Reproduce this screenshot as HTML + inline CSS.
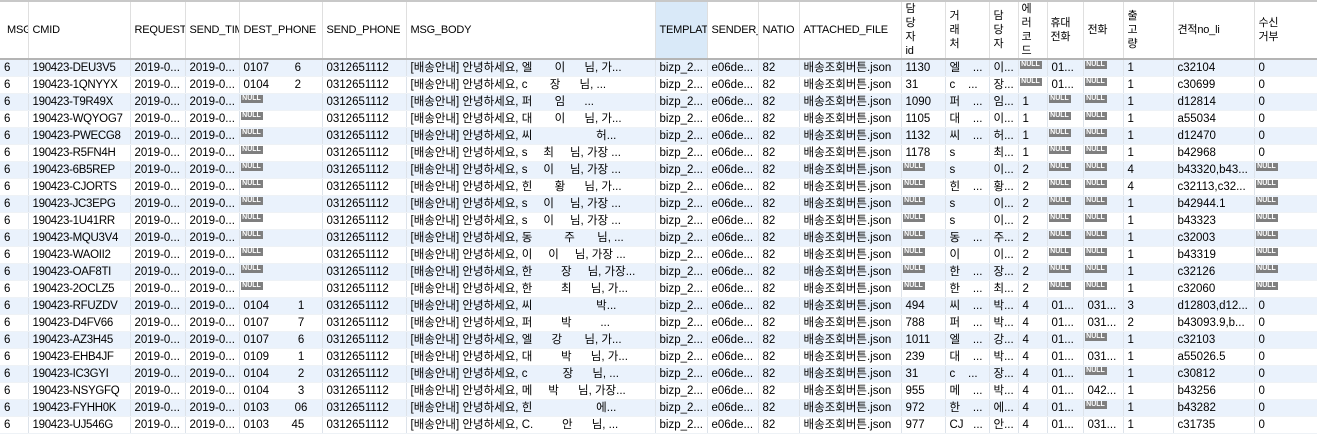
<!DOCTYPE html>
<html><head><meta charset="utf-8"><style>
*{margin:0;padding:0;box-sizing:border-box}
body{width:1317px;height:438px;overflow:hidden;background:#fff;font-family:"Liberation Sans","Noto Sans CJK KR",sans-serif;font-size:11.5px;color:#000}
table{border-collapse:collapse;table-layout:fixed;width:1317px;border-top:2px solid #c8c8c8}
th{height:58px;font-weight:normal;text-align:left;padding-left:4px;border-right:1px solid #dfdfdf;border-bottom:2px solid #b4b4b4;white-space:nowrap;overflow:hidden;line-height:14px;vertical-align:middle;font-size:11px;letter-spacing:-0.2px}
th.hl{background:#d9e9f8}
td{height:17px;padding-left:4px;border-right:1px solid #dde3ea;border-bottom:1px solid #eef2f6;white-space:pre;overflow:hidden;text-overflow:ellipsis;line-height:16px;vertical-align:top;position:relative}
td:nth-child(2){letter-spacing:-0.3px}
tr:nth-child(even) td{background:#eaf2fc}
th:last-child,td:last-child{border-right:none}
i{position:absolute;left:1px;top:1px;width:22px;height:8px;background:#7f7f7f;color:#fff;font-style:normal;font-size:7px;font-weight:bold;line-height:8px;text-align:center;font-family:"Liberation Sans",sans-serif;letter-spacing:0}
</style></head><body>
<table>
<colgroup><col style="width:28px"><col style="width:102px"><col style="width:55px"><col style="width:54px"><col style="width:83px"><col style="width:84px"><col style="width:249px"><col style="width:52px"><col style="width:51px"><col style="width:41px"><col style="width:102px"><col style="width:44px"><col style="width:44px"><col style="width:29px"><col style="width:29px"><col style="width:36px"><col style="width:40px"><col style="width:50px"><col style="width:81px"><col style="width:63px"></colgroup>
<tr><th style="padding-left:7px">MSG</th><th>CMID</th><th>REQUEST</th><th>SEND_TIM</th><th>DEST_PHONE</th><th>SEND_PHONE</th><th>MSG_BODY</th><th class="hl">TEMPLAT</th><th>SENDER_</th><th>NATIO</th><th>ATTACHED_FILE</th><th>담<br>당<br>자<br>id</th><th>거<br>래<br>처</th><th>담<br>당<br>자</th><th style="padding-left:3px">에<br>러<br>코<br>드</th><th style="padding-left:3px">휴대<br>전화</th><th>전화</th><th>출<br>고<br>량</th><th>견적no_li</th><th>수신<br>거부</th></tr>
<tr><td>6</td><td>190423-DEU3V5</td><td>2019-0...</td><td>2019-0...</td><td>0107        6</td><td>0312651112</td><td>[배송안내] 안녕하세요, 엘       이      님, 가...</td><td>bizp_2...</td><td>e06de...</td><td>82</td><td>배송조회버튼.json</td><td>1130</td><td>엘    ...</td><td>이...</td><td><i>NULL</i></td><td>01...</td><td><i>NULL</i></td><td>1</td><td>c32104</td><td>0</td></tr>
<tr><td>6</td><td>190423-1QNYYX</td><td>2019-0...</td><td>2019-0...</td><td>0104        2</td><td>0312651112</td><td>[배송안내] 안녕하세요, c       장      님, ...</td><td>bizp_2...</td><td>e06de...</td><td>82</td><td>배송조회버튼.json</td><td>31</td><td>c    ...</td><td>장...</td><td><i>NULL</i></td><td>01...</td><td><i>NULL</i></td><td>1</td><td>c30699</td><td>0</td></tr>
<tr><td>6</td><td>190423-T9R49X</td><td>2019-0...</td><td>2019-0...</td><td><i>NULL</i></td><td>0312651112</td><td>[배송안내] 안녕하세요, 퍼       임      ...</td><td>bizp_2...</td><td>e06de...</td><td>82</td><td>배송조회버튼.json</td><td>1090</td><td>퍼    ...</td><td>임...</td><td>1</td><td><i>NULL</i></td><td><i>NULL</i></td><td>1</td><td>d12814</td><td>0</td></tr>
<tr><td>6</td><td>190423-WQYOG7</td><td>2019-0...</td><td>2019-0...</td><td><i>NULL</i></td><td>0312651112</td><td>[배송안내] 안녕하세요, 대       이      님, 가...</td><td>bizp_2...</td><td>e06de...</td><td>82</td><td>배송조회버튼.json</td><td>1105</td><td>대    ...</td><td>이...</td><td>1</td><td><i>NULL</i></td><td><i>NULL</i></td><td>1</td><td>a55034</td><td>0</td></tr>
<tr><td>6</td><td>190423-PWECG8</td><td>2019-0...</td><td>2019-0...</td><td><i>NULL</i></td><td>0312651112</td><td>[배송안내] 안녕하세요, 씨                    허...</td><td>bizp_2...</td><td>e06de...</td><td>82</td><td>배송조회버튼.json</td><td>1132</td><td>씨    ...</td><td>허...</td><td>1</td><td><i>NULL</i></td><td><i>NULL</i></td><td>1</td><td>d12470</td><td>0</td></tr>
<tr><td>6</td><td>190423-R5FN4H</td><td>2019-0...</td><td>2019-0...</td><td><i>NULL</i></td><td>0312651112</td><td>[배송안내] 안녕하세요, s     최     님, 가장 ...</td><td>bizp_2...</td><td>e06de...</td><td>82</td><td>배송조회버튼.json</td><td>1178</td><td>s</td><td>최...</td><td>1</td><td><i>NULL</i></td><td><i>NULL</i></td><td>1</td><td>b42968</td><td>0</td></tr>
<tr><td>6</td><td>190423-6B5REP</td><td>2019-0...</td><td>2019-0...</td><td><i>NULL</i></td><td>0312651112</td><td>[배송안내] 안녕하세요, s     이     님, 가장 ...</td><td>bizp_2...</td><td>e06de...</td><td>82</td><td>배송조회버튼.json</td><td><i>NULL</i></td><td>s</td><td>이...</td><td>2</td><td><i>NULL</i></td><td><i>NULL</i></td><td>4</td><td>b43320,b43...</td><td><i>NULL</i></td></tr>
<tr><td>6</td><td>190423-CJORTS</td><td>2019-0...</td><td>2019-0...</td><td><i>NULL</i></td><td>0312651112</td><td>[배송안내] 안녕하세요, 힌       황      님, 가...</td><td>bizp_2...</td><td>e06de...</td><td>82</td><td>배송조회버튼.json</td><td><i>NULL</i></td><td>힌    ...</td><td>황...</td><td>2</td><td><i>NULL</i></td><td><i>NULL</i></td><td>4</td><td>c32113,c32...</td><td><i>NULL</i></td></tr>
<tr><td>6</td><td>190423-JC3EPG</td><td>2019-0...</td><td>2019-0...</td><td><i>NULL</i></td><td>0312651112</td><td>[배송안내] 안녕하세요, s     이     님, 가장 ...</td><td>bizp_2...</td><td>e06de...</td><td>82</td><td>배송조회버튼.json</td><td><i>NULL</i></td><td>s</td><td>이...</td><td>2</td><td><i>NULL</i></td><td><i>NULL</i></td><td>1</td><td>b42944.1</td><td><i>NULL</i></td></tr>
<tr><td>6</td><td>190423-1U41RR</td><td>2019-0...</td><td>2019-0...</td><td><i>NULL</i></td><td>0312651112</td><td>[배송안내] 안녕하세요, s     이     님, 가장 ...</td><td>bizp_2...</td><td>e06de...</td><td>82</td><td>배송조회버튼.json</td><td><i>NULL</i></td><td>s</td><td>이...</td><td>2</td><td><i>NULL</i></td><td><i>NULL</i></td><td>1</td><td>b43323</td><td><i>NULL</i></td></tr>
<tr><td>6</td><td>190423-MQU3V4</td><td>2019-0...</td><td>2019-0...</td><td><i>NULL</i></td><td>0312651112</td><td>[배송안내] 안녕하세요, 동          주       님, ...</td><td>bizp_2...</td><td>e06de...</td><td>82</td><td>배송조회버튼.json</td><td><i>NULL</i></td><td>동    ...</td><td>주...</td><td>2</td><td><i>NULL</i></td><td><i>NULL</i></td><td>1</td><td>c32003</td><td><i>NULL</i></td></tr>
<tr><td>6</td><td>190423-WAOII2</td><td>2019-0...</td><td>2019-0...</td><td><i>NULL</i></td><td>0312651112</td><td>[배송안내] 안녕하세요, 이     이     님, 가장 ...</td><td>bizp_2...</td><td>e06de...</td><td>82</td><td>배송조회버튼.json</td><td><i>NULL</i></td><td>이</td><td>이...</td><td>2</td><td><i>NULL</i></td><td><i>NULL</i></td><td>1</td><td>b43319</td><td><i>NULL</i></td></tr>
<tr><td>6</td><td>190423-OAF8TI</td><td>2019-0...</td><td>2019-0...</td><td><i>NULL</i></td><td>0312651112</td><td>[배송안내] 안녕하세요, 한         장     님, 가장...</td><td>bizp_2...</td><td>e06de...</td><td>82</td><td>배송조회버튼.json</td><td><i>NULL</i></td><td>한    ...</td><td>장...</td><td>2</td><td><i>NULL</i></td><td><i>NULL</i></td><td>1</td><td>c32126</td><td><i>NULL</i></td></tr>
<tr><td>6</td><td>190423-2OCLZ5</td><td>2019-0...</td><td>2019-0...</td><td><i>NULL</i></td><td>0312651112</td><td>[배송안내] 안녕하세요, 한         최      님, 가...</td><td>bizp_2...</td><td>e06de...</td><td>82</td><td>배송조회버튼.json</td><td><i>NULL</i></td><td>한    ...</td><td>최...</td><td>2</td><td><i>NULL</i></td><td><i>NULL</i></td><td>1</td><td>c32060</td><td><i>NULL</i></td></tr>
<tr><td>6</td><td>190423-RFUZDV</td><td>2019-0...</td><td>2019-0...</td><td>0104         1</td><td>0312651112</td><td>[배송안내] 안녕하세요, 씨                    박...</td><td>bizp_2...</td><td>e06de...</td><td>82</td><td>배송조회버튼.json</td><td>494</td><td>씨    ...</td><td>박...</td><td>4</td><td>01...</td><td>031...</td><td>3</td><td>d12803,d12...</td><td>0</td></tr>
<tr><td>6</td><td>190423-D4FV66</td><td>2019-0...</td><td>2019-0...</td><td>0107         7</td><td>0312651112</td><td>[배송안내] 안녕하세요, 퍼         박         ...</td><td>bizp_2...</td><td>e06de...</td><td>82</td><td>배송조회버튼.json</td><td>788</td><td>퍼    ...</td><td>박...</td><td>4</td><td>01...</td><td>031...</td><td>2</td><td>b43093.9,b...</td><td>0</td></tr>
<tr><td>6</td><td>190423-AZ3H45</td><td>2019-0...</td><td>2019-0...</td><td>0107         6</td><td>0312651112</td><td>[배송안내] 안녕하세요, 엘      강       님, 가...</td><td>bizp_2...</td><td>e06de...</td><td>82</td><td>배송조회버튼.json</td><td>1011</td><td>엘    ...</td><td>강...</td><td>4</td><td>01...</td><td><i>NULL</i></td><td>1</td><td>c32103</td><td>0</td></tr>
<tr><td>6</td><td>190423-EHB4JF</td><td>2019-0...</td><td>2019-0...</td><td>0109         1</td><td>0312651112</td><td>[배송안내] 안녕하세요, 대         박      님, 가...</td><td>bizp_2...</td><td>e06de...</td><td>82</td><td>배송조회버튼.json</td><td>239</td><td>대    ...</td><td>박...</td><td>4</td><td>01...</td><td>031...</td><td>1</td><td>a55026.5</td><td>0</td></tr>
<tr><td>6</td><td>190423-IC3GYI</td><td>2019-0...</td><td>2019-0...</td><td>0104         2</td><td>0312651112</td><td>[배송안내] 안녕하세요, c           장      님, ...</td><td>bizp_2...</td><td>e06de...</td><td>82</td><td>배송조회버튼.json</td><td>31</td><td>c    ...</td><td>장...</td><td>4</td><td>01...</td><td><i>NULL</i></td><td>1</td><td>c30812</td><td>0</td></tr>
<tr><td>6</td><td>190423-NSYGFQ</td><td>2019-0...</td><td>2019-0...</td><td>0104         3</td><td>0312651112</td><td>[배송안내] 안녕하세요, 메     박      님, 가장...</td><td>bizp_2...</td><td>e06de...</td><td>82</td><td>배송조회버튼.json</td><td>955</td><td>메    ...</td><td>박...</td><td>4</td><td>01...</td><td>042...</td><td>1</td><td>b43256</td><td>0</td></tr>
<tr><td>6</td><td>190423-FYHH0K</td><td>2019-0...</td><td>2019-0...</td><td>0103        06</td><td>0312651112</td><td>[배송안내] 안녕하세요, 힌                    에...</td><td>bizp_2...</td><td>e06de...</td><td>82</td><td>배송조회버튼.json</td><td>972</td><td>한    ...</td><td>에...</td><td>4</td><td>01...</td><td><i>NULL</i></td><td>1</td><td>b43282</td><td>0</td></tr>
<tr><td>6</td><td>190423-UJ546G</td><td>2019-0...</td><td>2019-0...</td><td>0103       45</td><td>0312651112</td><td>[배송안내] 안녕하세요, C.         안      님, ...</td><td>bizp_2...</td><td>e06de...</td><td>82</td><td>배송조회버튼.json</td><td>977</td><td>CJ   ...</td><td>안...</td><td>4</td><td>01...</td><td>031...</td><td>1</td><td>c31735</td><td>0</td></tr>
</table>
</body></html>
